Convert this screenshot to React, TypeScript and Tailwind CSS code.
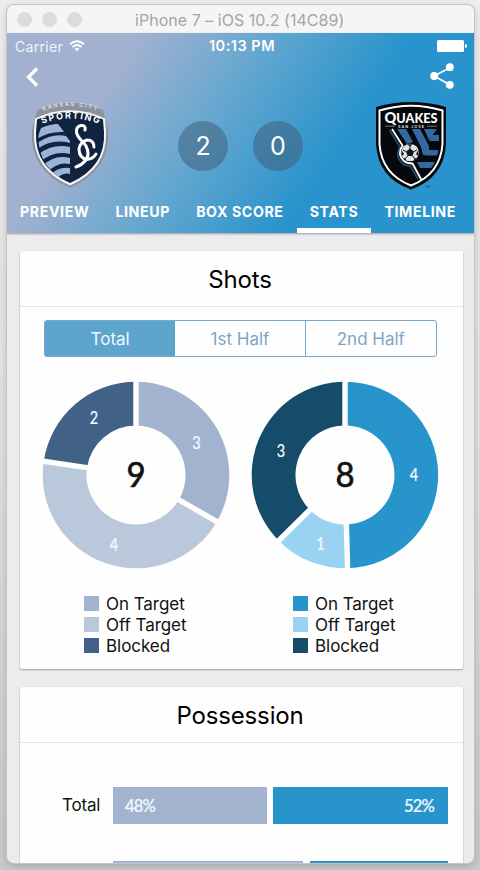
import React from "react";

type Slice = { label: string; color: string; from: number; to: number; x: number; y: number };
type DonutData = { total: string; slices: Slice[]; legend: { name: string; swatch: string }[] };

const home: DonutData = {
  total: "9",
  slices: [
    { label: "3", color: "#a2b3cf", from: 0, to: 120, x: 60.5, y: -32 },
    { label: "4", color: "#bac8dc", from: 120, to: 278.5, x: -22, y: 70 },
    { label: "2", color: "#426187", from: 278.5, to: 360, x: -42, y: -57 },
  ],
  legend: [
    { name: "On Target", swatch: "bg-[#a2b3cf]" },
    { name: "Off Target", swatch: "bg-[#bac8dc]" },
    { name: "Blocked", swatch: "bg-[#426187]" },
  ],
};

const away: DonutData = {
  total: "8",
  slices: [
    { label: "4", color: "#2894cc", from: 0, to: 178.4, x: 69, y: 0 },
    { label: "1", color: "#9ad3f2", from: 178.4, to: 225.3, x: -24.5, y: 69 },
    { label: "3", color: "#144c69", from: 225.3, to: 360, x: -64, y: -24.5 },
  ],
  legend: [
    { name: "On Target", swatch: "bg-[#2894cc]" },
    { name: "Off Target", swatch: "bg-[#9ad3f2]" },
    { name: "Blocked", swatch: "bg-[#144c69]" },
  ],
};

const OUTER = 93.3;
const INNER = 49.5;

function at(r: number, deg: number) {
  const a = (deg * Math.PI) / 180;
  return `${(r * Math.sin(a)).toFixed(2)} ${(-r * Math.cos(a)).toFixed(2)}`;
}

function ring(from: number, to: number) {
  const large = to - from > 180 ? 1 : 0;
  return `M${at(OUTER, from)}A${OUTER} ${OUTER} 0 ${large} 1 ${at(OUTER, to)}L${at(INNER, to)}A${INNER} ${INNER} 0 ${large} 0 ${at(INNER, from)}Z`;
}

function Donut({ data }: { data: DonutData }) {
  return (
    <div className="flex w-[188px] flex-col items-center">
      <svg className="block h-[188px] w-[188px]" viewBox="-94 -94 188 188">
        {data.slices.map((s) => (
          <path key={s.from} d={ring(s.from, s.to)} fill={s.color} />
        ))}
        {data.slices.map((s) => (
          <path key={s.from} d={`M${at(INNER - 3, s.from)}L${at(OUTER + 3, s.from)}`} stroke="#fefefe" strokeWidth="5.4" />
        ))}
        {data.slices.map((s) => (
          <text key={s.from} transform={`translate(${s.x} ${s.y + 6}) scale(.85 1)`} textAnchor="middle" fontSize="17" fill="#f4fbff" stroke="#f4fbff" strokeWidth=".25" className="font-[Lato,sans-serif]">
            {s.label}
          </text>
        ))}
        <text transform="translate(0 12.200) scale(.94 1)" textAnchor="middle" fontSize="35" fill="#111" stroke="#111" strokeWidth=".7" className="font-[Lato,sans-serif]">
          {data.total}
        </text>
      </svg>
      <ul className="mt-[24px] w-[104px]">
        {data.legend.map((l) => (
          <li key={l.name} className="flex h-[21px] items-center whitespace-nowrap text-[17px] leading-[21px] tracking-[-0.05px] text-[#111]">
            <span className={`mr-[7px] h-[15px] w-[15px] shrink-0 ${l.swatch}`} />
            <span className="pt-px">{l.name}</span>
          </li>
        ))}
      </ul>
    </div>
  );
}

function SportingCrest() {
  return (
    <svg className="h-[88px] w-[78px] overflow-visible" viewBox="0 0 78 88">
      <defs>
        <path id="kcArc" d="M5 12.500Q39 -2.500 73 12.500" />
        <path id="sportArc" d="M5 25.500Q39 9.500 74 25.500" />
        <clipPath id="kcClip">
          <path d="M8 27Q39 16 70 27Q75 66 39 82.500Q3 66 8 27Z" />
        </clipPath>
      </defs>
      <path d="M6 9.500Q39 -6 72 9.500Q74 17 77 29Q80 69 39 87Q-2 69 1 29Q4 17 6 9.500Z" fill="#8d929c" />
      <path d="M4 17.500Q39 1 74 17.500L75 30Q77 68 39 84.500Q1 68 3 30Z" fill="#f3f6fa" />
      <path d="M6 18.500Q39 3.500 72 18.500L73 31Q75 66 39 82Q3 66 5 31Z" fill="#10233f" />
      <g clipPath="url(#kcClip)" fill="#9db4d8">
        <path d="M10 27Q20 22.500 27 23L33 31Q18 30 6 38Z" />
        <path d="M5 43Q20 32 35 35L39 40V42Q19 37 4 50Z" />
        <path d="M5 55Q21 42 39 46V53Q22 49 8 62Z" />
        <path d="M10 66Q23 53 39 57V63Q27 60 15 72Z" />
        <path d="M18 75Q27 65 39 67V73Q31 71 25 79Z" />
      </g>
      <path
        d="M54 29Q55 24 50 24.500Q45 25.500 45.500 31C46 37 52 40 55 45Q59 53 55 59Q51 64 45 66M63 46Q63 39 56 39Q49 41 48 48Q48 57 56 58.500Q62 58 65 53"
        fill="none"
        stroke="#fff"
        strokeWidth="3"
        strokeLinecap="round"
      />
      <text fontSize="5.500" fontWeight="700" fill="#dcdde0" textAnchor="middle" letterSpacing="1.700" className="font-[Inter,sans-serif]">
        <textPath href="#kcArc" startOffset="51%">KANSAS CITY</textPath>
      </text>
      <text fontSize="9" fontWeight="700" fill="#fff" textAnchor="middle" letterSpacing="1.600" className="font-[Inter,sans-serif]">
        <textPath href="#sportArc" startOffset="51%">SPORTING</textPath>
      </text>
    </svg>
  );
}

function QuakesCrest() {
  return (
    <svg className="h-[90px] w-[72px]" viewBox="0 0 72 90">
      <defs>
        <clipPath id="sjClip">
          <path d="M8 28H64V44Q62 72 36 82Q10 72 8 44Z" />
        </clipPath>
      </defs>
      <path d="M1 6Q36 -4 71 6V43Q69 77 36 88.500Q3 77 1 43Z" fill="#06080c" />
      <path d="M4.500 9.500Q36 0 67.500 9.500V43Q65.500 73 36 84.500Q6.500 73 4.500 43Z" fill="#06080c" stroke="#fff" strokeWidth="2" />
      <g clipPath="url(#sjClip)" fill="#3468a0">
        <path d="M22 28H31L38 41L32 43Z" />
        <path d="M37 28H45L54 45V54H48L46 46Z" />
        <path d="M49 28H62L54 39Z" />
        <path d="M57 34H66V40H54ZM50 49H66V54.500H50ZM42 61H66V67H45Z" />
      </g>
      <path d="M14.500 29L25 46Q19.500 55 27 62Q30 65 35.500 65L43 78" fill="none" stroke="#23496f" strokeWidth="1.800" />
      <path d="M17 28L27.500 44.500Q21.500 53 29 60Q32 62.500 37.500 62.500L46.500 79" fill="none" stroke="#fff" strokeWidth="1.800" />
      <circle cx="35" cy="51.500" r="8.800" fill="#dfe2e6" />
      <path d="M35 47.500L39 50.500L37.500 55H32.500L31 50.500ZM32 43.200H38L35 45.500ZM26.500 49L29 53L27 55ZM43.500 49L41 53L43 55ZM31.500 59.500L30 57L28 58ZM38.500 59.500L40 57L42 58Z" fill="#10141c" />
      <path d="M35 45V48M39 50.500L42 49M37.500 55L40 58M32.500 55L30 58M31 50.500L28 49" stroke="#10141c" strokeWidth="1" />
      <text x="36" y="21.500" textAnchor="middle" fontSize="15.500" fontWeight="900" fill="#fff" textLength="53" lengthAdjust="spacingAndGlyphs" className="font-[Lato,sans-serif]">
        Q<tspan fontSize="13.500">UAKES</tspan>
      </text>
      <path d="M10 25.200H20M52 25.200H62" stroke="#777" strokeWidth="1" />
      <text x="36" y="27" textAnchor="middle" fontSize="3.800" fontWeight="700" fill="#ddd" textLength="26" className="font-[Inter,sans-serif]">
        SAN JOSE
      </text>
      <text x="50" y="87" fontSize="3" fill="#0b4567" className="font-[Inter,sans-serif]">
        TM
      </text>
    </svg>
  );
}

function WifiIcon() {
  return (
    <svg className="h-[12px] w-[16px]" viewBox="0 0 16 12" fill="none" stroke="#fff" strokeWidth="1.900">
      <path d="M1 4.300Q8 -2 15 4.300" />
      <path d="M3.600 7Q8 3 12.400 7" />
      <path d="M5.700 8.700Q8 6.700 10.300 8.700L8 11.300Z" fill="#fff" stroke="none" />
    </svg>
  );
}

function Header() {
  return (
    <header className="flex h-[200px] flex-col bg-[linear-gradient(124deg,#a3b1d0_22%,#64a7cf_44%,#2893cc_68%)] text-white shadow-[0_1px_2px_rgba(0,0,0,0.35)]">
      <div className="grid h-[26px] grid-cols-3 items-center pl-2 pr-[7px] text-[14px]">
        <div className="flex items-center gap-[6px]">
          <span className="tracking-[0.3px] text-[#eef4fc]">Carrier</span>
          <WifiIcon />
        </div>
        <span className="whitespace-nowrap pl-[2px] text-center text-[14.5px] font-semibold tracking-[0.5px]">10:13 PM</span>
        <svg className="h-[12px] w-[30px] justify-self-end" viewBox="0 0 30 12" fill="#fff">
          <rect x="0" y="0" width="27" height="12" rx="1.500" />
          <path d="M28 4Q30 4 30 6T28 8Z" />
        </svg>
      </div>
      <div className="flex h-[35px] items-center justify-between pl-[19px] pr-[20px]">
        <svg className="h-[20px] w-[13px]" viewBox="0 0 13 20" fill="none" stroke="#fff" strokeWidth="3.200">
          <path d="M11 1.500L2.500 10L11 18.500" />
        </svg>
        <svg className="h-[26px] w-[24px] -translate-y-[1px]" viewBox="0 0 23 25" fill="#fff" stroke="#fff">
          <path d="M19 4.500L4 12.500L19 21" fill="none" strokeWidth="1.700" />
          <circle cx="19" cy="4" r="3.300" />
          <circle cx="4" cy="12.500" r="3.300" />
          <circle cx="19" cy="21" r="3.300" />
        </svg>
      </div>
      <div className="flex h-[100px] items-start justify-between pl-[24px] pr-[27px] pt-[7px]">
        <SportingCrest />
        <div className="flex gap-[25px] pr-[3px] pt-[20px]">
          {["2", "0"].map((n) => (
            <span key={n} className="h-[50px] w-[50px] rounded-full bg-[#3d5a73]/50 text-center text-[25px] leading-[51px]">
              {n}
            </span>
          ))}
        </div>
        <QuakesCrest />
      </div>
      <nav className="flex h-[39px] justify-between pl-[13px] pr-[18px] text-[14.2px] font-bold leading-[36px] tracking-[0.6px]">
        <span>PREVIEW</span>
        <span>LINEUP</span>
        <span>BOX SCORE</span>
        <span className="-mx-[13px] border-b-[5px] border-white px-[13px]">STATS</span>
        <span>TIMELINE</span>
      </nav>
    </header>
  );
}

function Card({ title, className, children }: { title: string; className: string; children: React.ReactNode }) {
  return (
    <section className={`rounded-[2px] bg-[#fefefe] shadow-[0_1px_2px_rgba(0,0,0,0.35)] ${className}`}>
      <h2 className="h-14 border-b border-[#e6e7ea] pr-[3px] text-center text-[24px] leading-[57px] tracking-[-0.15px] text-black">{title}</h2>
      {children}
    </section>
  );
}

export default function App() {
  return (
    <div className="h-[870px] w-[480px] overflow-hidden bg-[linear-gradient(#efeeef,#e0dfe1_50%,#c8c8c9)] px-[7px] pt-[5px] font-[Inter,'Liberation_Sans',sans-serif]">
      <div className="h-[858px] w-[467px] overflow-hidden rounded-[7px] bg-[#ecebed] shadow-[0_0_0_1px_#c5c3c5,0_2px_8px_rgba(0,0,0,0.2)]">
        <div className="flex h-7 items-center bg-[#f6f5f6] pl-[10px]">
          <div className="flex gap-[10px]">
            <i className="h-[15px] w-[15px] rounded-full bg-[#dddbdd]" />
            <i className="h-[15px] w-[15px] rounded-full bg-[#dddbdd]" />
            <i className="h-[15px] w-[15px] rounded-full bg-[#dddbdd]" />
          </div>
          <span className="ml-[53px] whitespace-nowrap pt-[2px] text-[16px] tracking-[0.03px] text-[#a5a4a5]">iPhone 7 – iOS 10.2 (14C89)</span>
        </div>
        <Header />
        <main className="flex flex-col gap-[18px] pl-[13px] pr-[11px] pt-[18px]">
          <Card title="Shots" className="h-[418px]">
            <div className="ml-[24px] mt-[13px] grid h-[37px] w-[393px] grid-cols-3 rounded-[3px] border border-[#79a6c9] text-center text-[17px] leading-[36px] text-[#7da5c6]">
              <span className="h-[35px] bg-[#5ea5cd] text-[#eef8ff]">Total</span>
              <span className="h-[35px] border-r border-[#79a6c9]">1st Half</span>
              <span className="h-[35px]">2nd Half</span>
            </div>
            <div className="mt-[24px] flex gap-[21px] pl-[22px]">
              <Donut data={home} />
              <Donut data={away} />
            </div>
          </Card>
          <Card title="Possession" className="h-[220px]">
            <div className="mt-[44px] flex h-[37px] items-center pl-[42px] pr-[15px]">
              <span className="w-[51px] pt-px text-[17px] tracking-[-0.2px] text-[#111]">Total</span>
              <div className="flex h-full flex-1 gap-[6px] font-[Lato,sans-serif] text-[16.5px] font-medium leading-[38px] tracking-[-0.8px] text-[#effaff] [-webkit-text-stroke:0.2px_#effaff]">
                <span className="w-[154px] bg-[#a2b3cf] pl-3">48%</span>
                <span className="flex-1 bg-[#2894cc] pr-[14px] text-right">52%</span>
              </div>
            </div>
            <div className="mt-[37px] flex h-[37px] gap-[7px] pl-[93px] pr-[15px]">
              <span className="w-[190px] bg-[#a2b3cf]" />
              <span className="flex-1 bg-[#2894cc]" />
            </div>
          </Card>
        </main>
      </div>
    </div>
  );
}
